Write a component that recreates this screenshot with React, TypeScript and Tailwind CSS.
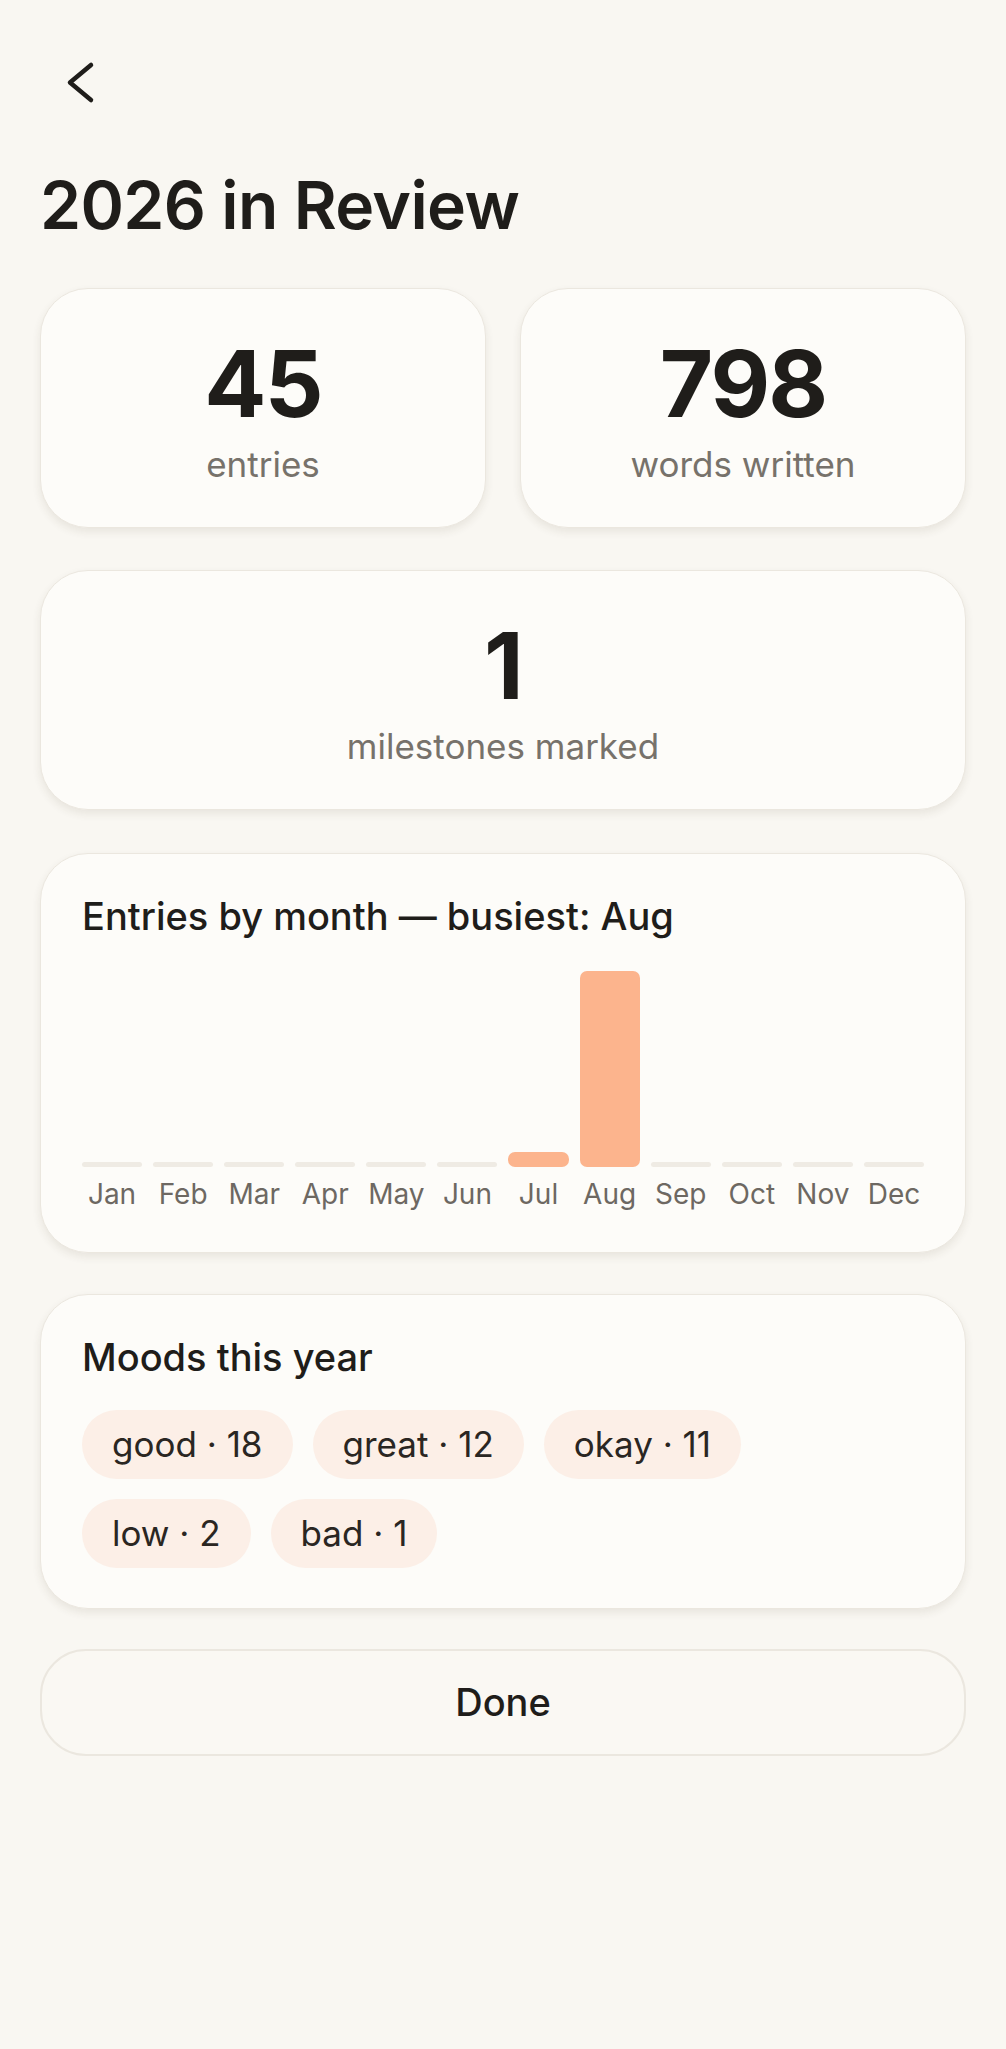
const months = [
  { m: "Jan", n: 0 },
  { m: "Feb", n: 0 },
  { m: "Mar", n: 0 },
  { m: "Apr", n: 0 },
  { m: "May", n: 0 },
  { m: "Jun", n: 0 },
  { m: "Jul", n: 3 },
  { m: "Aug", n: 42 },
  { m: "Sep", n: 0 },
  { m: "Oct", n: 0 },
  { m: "Nov", n: 0 },
  { m: "Dec", n: 0 },
];

const moodRows = [
  ["good · 18", "great · 12", "okay · 11"],
  ["low · 2", "bad · 1"],
];

const card =
  "rounded-[48px] border-[1.5px] border-[#ebe7df] bg-[#fdfcf9] shadow-[0_4px_9px_rgba(70,50,30,0.09)]";

export default function App() {
  const max = Math.max(...months.map((x) => x.n));

  return (
    <div className="min-h-screen bg-[#f9f7f2] px-[40px] font-['Inter',sans-serif] text-[#1f1d1a]">
      {/* back */}
      <div className="pt-[60px]">
        <svg width="30" height="46" viewBox="0 0 30 46" className="ml-[26px]" fill="none">
          <polyline
            points="25,5 4,22.5 25,40"
            stroke="#1f1d1a"
            strokeWidth="4.5"
            strokeLinecap="round"
            strokeLinejoin="round"
          />
        </svg>
      </div>

      <h1 className="mt-[60px] text-[66px] font-semibold leading-[79px] tracking-[-0.01em]">2026 in Review</h1>

      <div className="mt-[43px] grid grid-cols-2 gap-[34px]">
        <StatCard value="45" label="entries" />
        <StatCard value="798" label="words written" />
      </div>

      <div className="mt-[42px]">
        <StatCard value="1" label="milestones marked" />
      </div>

      {/* chart */}
      <div className={`${card} mt-[43px] px-[41px] pt-[40px] pb-[42px]`}>
        <h2 className="text-[38px] font-medium leading-[44px]">Entries by month — busiest: Aug</h2>
        <div className="mt-[33px] grid h-[196px] grid-cols-12 items-end gap-[11px]">
          {months.map((x) => (
            <div
              key={x.m}
              className={x.n > 0 ? "rounded-[7px] bg-[#fcb48d]" : "rounded-full bg-[#efebe4]"}
              style={{ height: x.n > 0 ? Math.max(15, (x.n / max) * 196) : 5 }}
            />
          ))}
        </div>
        <div className="mt-[11px] grid grid-cols-12 gap-[11px]">
          {months.map((x) => (
            <span key={x.m} className="text-center text-[28px] leading-[32px] text-[#6d6862]">
              {x.m}
            </span>
          ))}
        </div>
      </div>

      {/* moods */}
      <div className={`${card} mt-[41px] px-[41px] pt-[40px] pb-[40px]`}>
        <h2 className="text-[38px] font-medium leading-[44px]">Moods this year</h2>
        <div className="mt-[31px] flex flex-col gap-[20px]">
          {moodRows.map((row, i) => (
            <div key={i} className="flex gap-[20px]">
              {row.map((m) => (
                <span
                  key={m}
                  className="flex h-[69px] items-center rounded-full bg-[#fcefe7] px-[30px] text-[35px] text-[#2a2622]"
                >
                  {m}
                </span>
              ))}
            </div>
          ))}
        </div>
      </div>

      <button className="mt-[40px] flex h-[107px] w-full items-center justify-center rounded-[46px] border-2 border-[#ebe7df] bg-[#faf8f3] text-[38px] font-medium text-[#1f1d1a]">
        Done
      </button>
    </div>
  );
}

function StatCard({ value, label }: { value: string; label: string }) {
  return (
    <div className={`${card} flex h-[240px] flex-col items-center pt-[48px]`}>
      <span className="text-[92px] font-bold leading-[93px] tracking-[-0.02em]">{value}</span>
      <span className="mt-[12px] text-[35px] leading-[44px] text-[#77726b]">{label}</span>
    </div>
  );
}
